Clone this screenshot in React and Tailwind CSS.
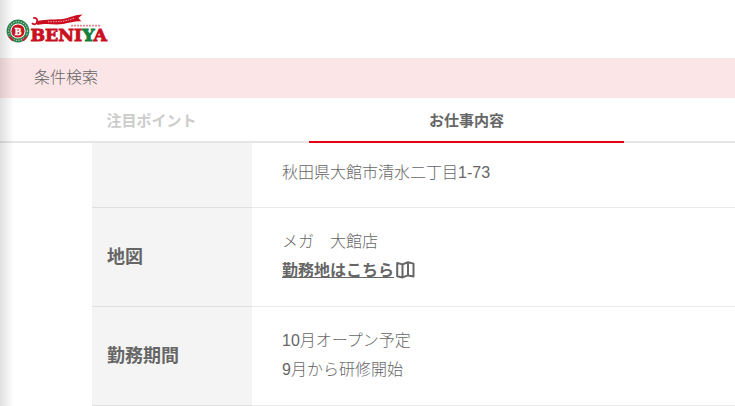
function BeniyaLogo() {
  return (
    <svg width="104" height="30" viewBox="0 0 104 30" role="img" aria-label="BENIYA">
      <circle cx="12" cy="17" r="11.4" fill="#2c8450" />
      <circle cx="12" cy="17" r="9.4" fill="none" stroke="#b9d8c2" strokeWidth="1.1" strokeDasharray="1.2 1.4" />
      <path d="M3.5 22.5A10.3 10.3 0 0 0 7.5 26.5" fill="none" stroke="#c8202c" strokeWidth="2" />
      <path d="M16.5 26.5A10.3 10.3 0 0 0 20.5 22.5" fill="none" stroke="#c8202c" strokeWidth="2" />
      <circle cx="12" cy="17" r="7.6" fill="#fff" />
      <circle cx="12" cy="17" r="6.6" fill="#c8141e" />
      <text x="12" y="20.6" textAnchor="middle" fontSize="10" fontWeight="700" fill="#fff" stroke="#fff" strokeWidth=".4" className="font-['Liberation_Serif',serif]">B</text>
      <path d="M30 7.6C41 4.5 50 6.2 58 4.8C65 3.4 69 .8 76.5 .6L72.5 4L75.5 7.4C69 7 64 9 57 10C48 11.2 41 9 31.5 11Z" fill="#cc0d20" />
      <path d="M42 7.8C50 7.6 57 8.4 68 4.2" fill="none" stroke="#f2a6ac" strokeWidth="1" strokeDasharray="1.5 1" />
      <path d="M27.2 4.2A3.1 3.1 0 1 1 26 9.2" fill="none" stroke="#cc0d20" strokeWidth="1.8" />
      <path d="M65 11.6H95" stroke="#dc8c93" strokeWidth="1.8" strokeDasharray="2.1 .9" />
      <text x="24.5" y="27.2" fontSize="17.3" fontWeight="700" fill="#c9101f" stroke="#c9101f" strokeWidth=".9" className="font-['DejaVu_Serif',serif]">
        BENI<tspan fill="#14803c" stroke="#14803c">Y</tspan>A
      </text>
    </svg>
  );
}

function MapIcon() {
  return (
    <svg className="ml-0.5 inline-block align-[-3px]" width="19" height="18" viewBox="0 0 19 18" fill="none" stroke="#666" strokeWidth="2" strokeLinejoin="round" aria-hidden="true">
      <path d="M1.2 2L6.5 3.4L12 1.2L17.5 2.6V15.4L12 14.4L6.5 16.4L1.2 15.2Z" />
      <path d="M6.5 3.5V16.2M12 1.5V14.2" />
    </svg>
  );
}

const rows = [
  { title: "", body: "秋田県大館市清水二丁目1-73" },
  {
    title: "地図",
    body: (
      <>
        メガ　大館店
        <br />
        <a href="#map" className="font-bold">
          <span className="underline">勤務地はこちら</span>
          <MapIcon />
        </a>
      </>
    ),
  },
  {
    title: "勤務期間",
    body: (
      <>
        10月オープン予定
        <br />
        9月から研修開始
      </>
    ),
  },
];

export default function App() {
  return (
    <div className="relative min-h-screen overflow-hidden bg-white font-['Liberation_Sans','Noto_Sans_CJK_JP',sans-serif] text-[#666]">
      <header className="flex h-[58px] items-center pl-1.5">
        <a href="#top"><BeniyaLogo /></a>
      </header>
      <div className="flex h-10 items-center bg-[#fce5e7] px-[34px]">
        <button type="button" className="text-base font-light">条件検索</button>
      </div>
      <nav className="flex h-[45px] text-[15px] font-bold">
        <button type="button" className="w-[309px] shrink-0 border-b-2 border-[#e5e5e5] pt-1 pr-1.5 text-[#ccc]">注目ポイント</button>
        <button type="button" aria-current="page" className="w-[315px] shrink-0 border-b-2 border-[#e60012] pt-1">お仕事内容</button>
        <div className="grow border-b-2 border-[#e5e5e5]" />
      </nav>
      <main className="pl-[92px]">
        <table className="w-full border-collapse text-left">
          <tbody>
            {rows.map((row) => (
              <tr key={row.title} className="border-b border-black/8">
                <th scope="row" className="w-40 bg-[#f4f4f4] px-[15px] text-lg font-bold">{row.title}</th>
                <td className="px-[30px] pt-[19px] pb-[21px] text-base leading-[29px] font-light in-[tr:first-child]:pt-[15px] in-[tr:first-child]:pb-5">{row.body}</td>
              </tr>
            ))}
          </tbody>
        </table>
      </main>
      <div className="pointer-events-none absolute inset-y-0 left-0 w-3.5 bg-linear-to-r from-black/12 to-transparent" />
    </div>
  );
}
